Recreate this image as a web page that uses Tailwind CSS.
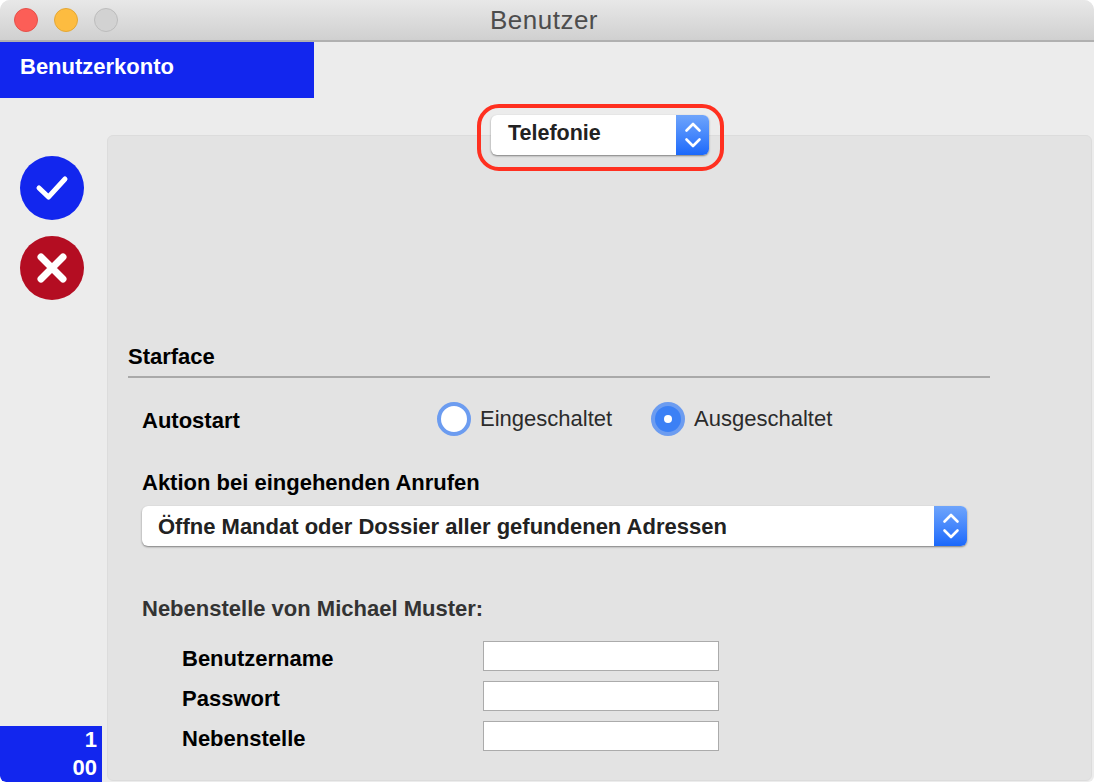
<!doctype html>
<html lang="de">
  <head>
    <meta charset="UTF-8" />
    <title>Benutzer</title>
    <script src="https://cdn.jsdelivr.net/npm/@tailwindcss/browser@4"></script>
  </head>
  <body class="w-[1094px] h-[782px] overflow-hidden bg-white font-['Liberation_Sans',sans-serif]">
    <div class="flex flex-col h-[782px] bg-[#ececec] rounded-t-[10px] rounded-b-[6px] overflow-hidden">
      <!-- title bar -->
      <header class="relative shrink-0 h-[42px] flex items-center justify-center bg-gradient-to-b from-[#e8e8e8] to-[#d0d0d0] border-b-2 border-[#b0b0b0]">
        <div class="absolute left-[14px] top-[8px] flex gap-[16px]">
          <span class="size-[24px] rounded-full bg-[#fc5e57] border border-[#e5504a]"></span>
          <span class="size-[24px] rounded-full bg-[#fdbc40] border border-[#e3a736]"></span>
          <span class="size-[24px] rounded-full bg-[#d2d2d2] border border-[#bcbcbc]"></span>
        </div>
        <h1 class="text-[26px] leading-none text-[#4d4d4d] tracking-[0.5px] mr-[6px]">Benutzer</h1>
      </header>

      <div class="flex h-[56px] shrink-0">
        <div class="w-[314px] bg-[#1226ee] text-white font-bold text-[22px] leading-[50px] pl-[20px]">Benutzerkonto</div>
      </div>

      <div class="flex flex-1 pt-[37px] min-h-0">
        <!-- left rail -->
        <aside class="w-[107px] shrink-0 flex flex-col">
          <div class="flex flex-col gap-[16px] pl-[20px] pt-[21px]">
            <svg class="size-[64px]" viewBox="0 0 64 64">
              <circle cx="32" cy="32" r="32" fill="#1226ee" />
              <path d="M19 32 L28.5 41 L45 23" fill="none" stroke="#fff" stroke-width="5" stroke-linecap="round" stroke-linejoin="round" />
            </svg>
            <svg class="size-[64px]" viewBox="0 0 64 64">
              <circle cx="32" cy="32" r="32" fill="#b40d22" />
              <path d="M21 21 L43 43 M43 21 L21 43" fill="none" stroke="#fff" stroke-width="7" stroke-linecap="round" />
            </svg>
          </div>
          <div class="mt-auto w-[102px] h-[56px] bg-[#1226ee] text-white font-bold text-[22px] leading-[28px] text-right pr-[5px] rounded-bl-[6px]">1<br />00</div>
        </aside>

        <!-- panel -->
        <main class="flex-1 mr-[2px] mb-[1px] bg-[#e3e3e3] border border-[#dcdcdc] rounded-[6px] pl-[20px] flex flex-col">
          <!-- section popup, sits across the panel's top edge -->
          <div class="self-start ml-[349px] -mt-[32px] rounded-[22px] border-[4px] border-[#ff3020] pl-[10px] pr-[11px] py-[7px] w-[247px] h-[67px]">
            <div class="flex h-[40px] rounded-[6px] bg-white shadow-[0_1px_2px_rgba(0,0,0,0.45)] overflow-hidden">
              <span class="flex-1 pl-[17px] font-bold text-[21.5px] leading-[37px] text-[#222]">Telefonie</span>
              <span class="w-[33px] flex items-center justify-center bg-gradient-to-b from-[#6ea4fb] to-[#1a68fb]">
                <svg width="20" height="30" viewBox="0 0 20 30" fill="none" stroke="#fff" stroke-width="2.6" stroke-linecap="round" stroke-linejoin="round">
                  <path d="M3.5 10.5 L10 4 L16.5 10.5" /><path d="M3.5 19.5 L10 26 L16.5 19.5" />
                </svg>
              </span>
            </div>
          </div>

          <h2 class="mt-[172px] font-bold text-[22px] leading-[28px] text-black">Starface</h2>
          <div class="mt-[5px] w-[862px] h-[2px] bg-[#a9a9a9]"></div>

          <div class="flex items-center mt-[25px] pl-[14px] h-[32px]">
            <span class="w-[295px] font-bold text-[22px] text-black pt-[3px]">Autostart</span>
            <span class="size-[34px] rounded-full bg-white border-[4px] border-[#6c9cf0]"></span>
            <span class="ml-[9px] mb-[2px] text-[22px] text-[#2b2b2b]">Eingeschaltet</span>
            <span class="ml-[39px] size-[34px] rounded-full bg-[#3b80f5] border-[4px] border-[#6c9cf0] flex items-center justify-center">
              <span class="size-[8px] rounded-full bg-white"></span>
            </span>
            <span class="ml-[9px] mb-[2px] text-[22px] text-[#2b2b2b]">Ausgeschaltet</span>
          </div>

          <p class="mt-[34px] pl-[14px] font-bold text-[22px] leading-[28px] text-black">Aktion bei eingehenden Anrufen</p>
          <div class="ml-[14px] mt-[9px] flex w-[825px] h-[40px] rounded-[6px] bg-white shadow-[0_1px_2px_rgba(0,0,0,0.45)] overflow-hidden">
            <span class="flex-1 pl-[16px] font-bold text-[22px] leading-[42px] text-[#222]">Öffne Mandat oder Dossier aller gefundenen Adressen</span>
            <span class="w-[33px] flex items-center justify-center bg-gradient-to-b from-[#6ea4fb] to-[#1a68fb]">
              <svg width="20" height="30" viewBox="0 0 20 30" fill="none" stroke="#fff" stroke-width="2.6" stroke-linecap="round" stroke-linejoin="round">
                <path d="M3.5 10.5 L10 4 L16.5 10.5" /><path d="M3.5 19.5 L10 26 L16.5 19.5" />
              </svg>
            </span>
          </div>

          <p class="mt-[49px] pl-[14px] font-bold text-[22px] leading-[28px] text-[#333]">Nebenstelle von Michael Muster:</p>

          <div class="mt-[18px] pl-[54px] flex flex-col gap-[10px]">
            <div class="flex h-[30px] font-bold text-[22px] text-black">
              <span class="w-[301px] leading-[36px]">Benutzername</span>
              <span class="w-[236px] h-[30px] bg-white border border-[#ababab]"></span>
            </div>
            <div class="flex h-[30px] font-bold text-[22px] text-black">
              <span class="w-[301px] leading-[36px]">Passwort</span>
              <span class="w-[236px] h-[30px] bg-white border border-[#ababab]"></span>
            </div>
            <div class="flex h-[30px] font-bold text-[22px] text-black">
              <span class="w-[301px] leading-[36px]">Nebenstelle</span>
              <span class="w-[236px] h-[30px] bg-white border border-[#ababab]"></span>
            </div>
          </div>
        </main>
      </div>
    </div>
  </body>
</html>
